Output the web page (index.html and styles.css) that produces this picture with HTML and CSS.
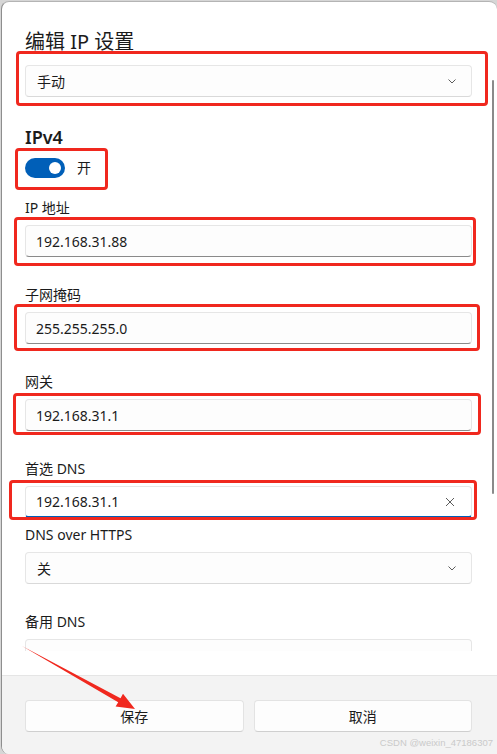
FILE: index.html
```html
<!DOCTYPE html>
<html>
<head>
    <meta charset="UTF-8">
    <link rel="stylesheet" href="styles.css">
</head>
<body>
    <div class="window">
        <div class="dialog">
            <div class="scroll">
                <div class="scroll-body">
                    <h1 class="title">编辑 IP 设置</h1>
                    <div class="select select-mode">
                        <span>手动</span>
                        <svg class="chevron" width="12" height="12" viewBox="0 0 12 12"><path d="M2.5 4.5 L6 8 L9.5 4.5" fill="none" stroke="#5c5c5c" stroke-width="1"/></svg>
                    </div>

                    <h2 class="section">IPv4</h2>
                    <div class="toggle-row">
                        <span class="toggle"><span class="knob"></span></span>
                        <span>开</span>
                    </div>

                    <div class="field field-first">
                        <label>IP 地址</label>
                        <div class="input">192.168.31.88</div>
                    </div>
                    <div class="field">
                        <label>子网掩码</label>
                        <div class="input">255.255.255.0</div>
                    </div>
                    <div class="field">
                        <label>网关</label>
                        <div class="input">192.168.31.1</div>
                    </div>
                    <div class="field">
                        <label>首选 DNS</label>
                        <div class="input focused">
                            <span>192.168.31.1</span>
                            <svg class="clear" width="10" height="10" viewBox="0 0 10 10"><path d="M1 1 L9 9 M9 1 L1 9" fill="none" stroke="#5c5c5c" stroke-width="1"/></svg>
                        </div>
                    </div>
                    <div class="field field-sub">
                        <label>DNS over HTTPS</label>
                        <div class="select">
                            <span>关</span>
                            <svg class="chevron" width="12" height="12" viewBox="0 0 12 12"><path d="M2.5 4.5 L6 8 L9.5 4.5" fill="none" stroke="#5c5c5c" stroke-width="1"/></svg>
                        </div>
                    </div>
                    <div class="field">
                        <label>备用 DNS</label>
                        <div class="input"></div>
                    </div>
                </div>
                <div class="scrollbar"></div>
            </div>
            <div class="spacer"></div>
            <div class="footer">
                <button class="btn">保存</button>
                <button class="btn">取消</button>
            </div>
        </div>

        <!-- screenshot annotations -->
        <div class="mark m1"></div>
        <div class="mark m2"></div>
        <div class="mark m3"></div>
        <div class="mark m4"></div>
        <div class="mark m5"></div>
        <div class="mark m6"></div>
        <svg class="arrow" width="497" height="754" viewBox="0 0 497 754">
            <polygon points="22,646 120.5,698.3 123,693.8 135,709 115.6,706.5 118.2,702.2" fill="#f0281e"/>
        </svg>
        <div class="watermark">CSDN @weixin_47186307</div>
    </div>
</body>
</html>
```

FILE: styles.css
```css
body {
    margin: 0;
    font-family: "Noto Sans", "Noto Sans CJK SC", sans-serif;
    color: #1b1b1b;
    background: #d6d6d6;
}

.window {
    position: relative;
    width: 497px;
    height: 754px;
    overflow: hidden;
    background: #d6d6d6;
}

.dialog {
    margin: 1px 0 0 1px;
    width: 495px;
    height: 752px;
    background: #fff;
    border-top: 1px solid #b4b4b4;
    border-left: 1px solid #8e8e8e;
    border-radius: 8px 8px 0 8px;
    display: flex;
    flex-direction: column;
    overflow: hidden;
}

.scroll {
    position: relative;
    height: 649px;
    overflow: hidden;
    flex-shrink: 0;
}

.scroll-body {
    padding: 26px 25px 0 23px;
}

.scrollbar {
    position: absolute;
    left: 490px;
    top: 78px;
    width: 2px;
    height: 414px;
    background: #8a8a8a;
    border-radius: 1px;
}

.title {
    margin: 0;
    font-size: 20px;
    line-height: 28px;
    font-weight: 400;
}

.select,
.input {
    box-sizing: border-box;
    height: 32px;
    display: flex;
    align-items: center;
    justify-content: space-between;
    padding: 0 13px 0 11px;
    font-size: 14px;
    background: #fdfdfd;
    border: 1px solid #e6e6e6;
    border-radius: 4px;
}

.select {
    border-bottom-color: #d9d9d9;
}

.input {
    padding-left: 10px;
    border-bottom-color: #8a8a8a;
}

.input.focused {
    background: #fff;
    border-bottom: 2px solid #005fb8;
    padding-right: 16px;
}

.select-mode {
    margin-top: 9px;
}

.section {
    margin: 28px 0 0;
    font-size: 18px;
    line-height: 24px;
    font-weight: 600;
}

.toggle-row {
    margin-top: 9px;
    display: flex;
    align-items: center;
    gap: 12px;
    font-size: 14px;
    line-height: 20px;
}

.toggle {
    width: 40px;
    height: 20px;
    border-radius: 10px;
    background: #005fb8;
    display: flex;
    align-items: center;
    justify-content: flex-end;
    padding-right: 4px;
    box-sizing: border-box;
}

.knob {
    width: 12px;
    height: 12px;
    border-radius: 50%;
    background: #fff;
}

.field {
    margin-top: 28px;
}

.field label {
    display: block;
    font-size: 14px;
    line-height: 20px;
    margin-bottom: 7px;
}

.field-first {
    margin-top: 20px;
}

.field-sub {
    margin-top: 7px;
}

.spacer {
    height: 24px;
    flex-shrink: 0;
}

.footer {
    flex: 1;
    background: #f3f3f3;
    border-top: 1px solid #e5e5e5;
    padding: 24px 25px 0 23px;
    display: flex;
    gap: 10px;
}

.btn {
    flex: 1;
    height: 32px;
    font-family: inherit;
    font-size: 14px;
    color: #1b1b1b;
    background: #fdfdfd;
    border: 1px solid #e3e3e3;
    border-bottom-color: #cfcfcf;
    border-radius: 4px;
    padding: 0;
}

/* red boxes drawn over the screenshot */
.mark {
    position: absolute;
    box-sizing: border-box;
    border: 3px solid #f0281e;
    border-radius: 4px;
}
.m1 { left: 16px; top: 51px; width: 472px; height: 55px; }
.m2 { left: 15px; top: 148px; width: 93px; height: 42px; }
.m3 { left: 14px; top: 217px; width: 462px; height: 49px; }
.m4 { left: 14px; top: 304px; width: 466px; height: 47px; }
.m5 { left: 13px; top: 393px; width: 468px; height: 42px; }
.m6 { left: 9px; top: 480px; width: 468px; height: 40px; }

.arrow {
    position: absolute;
    left: 0;
    top: 0;
    pointer-events: none;
}

.watermark {
    position: absolute;
    right: 4px;
    top: 737px;
    font-family: "Liberation Sans", sans-serif;
    font-size: 9.5px;
    line-height: 12px;
    color: #cacaca;
}
```
